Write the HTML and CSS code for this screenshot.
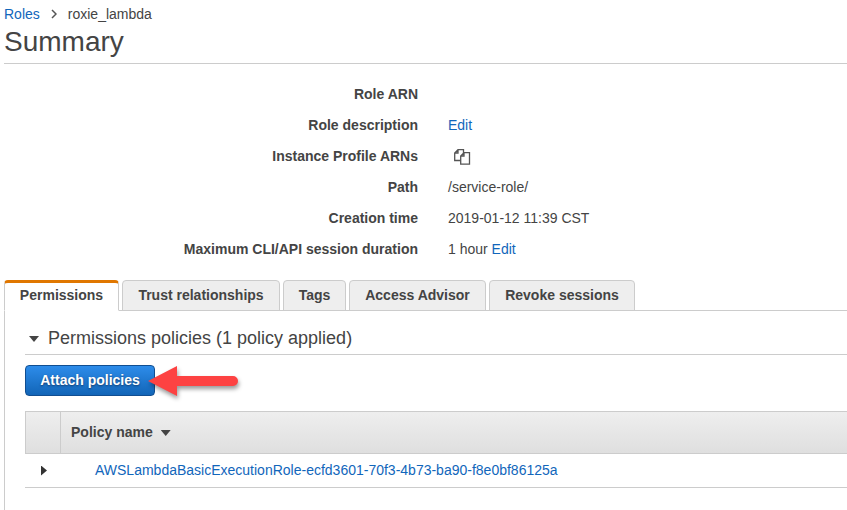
FILE: index.html
```html
<!DOCTYPE html>
<html lang="en">
<head>
<meta charset="utf-8">
<title>Role summary</title>
<link rel="stylesheet" href="styles.css">
</head>
<body>
<header class="page-header">
  <nav class="breadcrumb">
    <a href="#">Roles</a>
    <svg class="chevron" width="6" height="10" viewBox="0 0 6 10"><path d="M1 1l4 4-4 4"/></svg>
    <span>roxie_lambda</span>
  </nav>
  <h1>Summary</h1>
</header>
<dl class="details">
  <dt>Role ARN</dt><dd></dd>
  <dt>Role description</dt><dd><a href="#">Edit</a></dd>
  <dt>Instance Profile ARNs</dt>
  <dd><svg class="copy" width="17" height="16" viewBox="0 0 17 16"><path d="M7 11.500H.7V4L4 .7h5.500V4M4 .7V4H.7"/><path d="M10 3.700h5.500v11.500H6.700V7zM10 3.700V7H6.700"/></svg></dd>
  <dt>Path</dt><dd>/service-role/</dd>
  <dt>Creation time</dt><dd>2019-01-12 11:39 CST</dd>
  <dt>Maximum CLI/API session duration</dt><dd>1 hour <a href="#">Edit</a></dd>
</dl>
<nav class="tabs">
  <a class="tab active tab-permissions" href="#">Permissions</a>
  <a class="tab tab-trust" href="#">Trust relationships</a>
  <a class="tab tab-tags" href="#">Tags</a>
  <a class="tab tab-advisor" href="#">Access Advisor</a>
  <a class="tab tab-revoke" href="#">Revoke sessions</a>
</nav>
<main class="panel">
  <h2><span class="caret"></span><span class="section-title">Permissions policies (1 policy applied)</span></h2>
  <div class="actions">
    <button class="primary">Attach policies</button>
    <svg class="arrow" width="104" height="44" viewBox="0 0 104 44"><path d="M5 20L34 5v10h56a5 5 0 0 1 0 10H34v10z"/></svg>
  </div>
  <div class="table">
    <div class="row head"><div class="cell toggle"></div><div class="cell name">Policy name<span class="caret"></span></div></div>
    <div class="row"><div class="cell toggle"><span class="expand"></span></div><div class="cell policy"><a href="#">AWSLambdaBasicExecutionRole-ecfd3601-70f3-4b73-ba90-f8e0bf86125a</a></div></div>
  </div>
</main>
</body>
</html>
```
FILE: styles.css
```css
* { box-sizing: border-box; }
body {
  margin: 0;
  height: 510px;
  overflow: hidden;
  display: flex;
  flex-direction: column;
  background: #fff;
  color: #444;
  font: 14px/16px "Liberation Sans", Arial, sans-serif;
}
a { color: #1166bb; text-decoration: none; }
.page-header { margin-left: 4px; height: 64px; padding-top: 6px; border-bottom: 1px solid #ccc; }
.breadcrumb { display: flex; align-items: center; height: 16px; }
.chevron { margin: 0 11px; fill: none; stroke: #555; stroke-width: 1.5; }
h1 { margin: 4px 0 0; font-size: 28px; line-height: 32px; font-weight: 400; }
.details {
  margin: 15px 0 0;
  display: grid;
  grid-template-columns: 418px 1fr;
  column-gap: 30px;
  grid-auto-rows: 31px;
  line-height: 31px;
}
dt { text-align: right; font-weight: 700; white-space: nowrap; }
dd { margin: 0; }
.copy { display: block; margin: 8px 0 0 6px; fill: #fff; stroke: #555; stroke-width: 1.3; }
.tabs { display: flex; gap: 3px; height: 31px; margin: 15px 0 -1px 4px; }
.tab {
  border: 1px solid #ccc;
  border-radius: 4px 4px 0 0;
  background: #eee;
  color: #444;
  font-weight: 700;
  line-height: 29px;
  text-align: center;
}
.tab.active { position: relative; background: #fff; border-top: 3px solid #e07700; border-bottom-color: #fff; line-height: 25px; }
.tab-permissions { width: 115px; }
.tab-trust { width: 158px; }
.tab-tags { width: 63px; }
.tab-advisor { width: 137px; }
.tab-revoke { width: 146px; }
.panel { flex: 1; margin-left: 4px; border-top: 1px solid #ccc; border-left: 1px solid #ccc; padding-left: 20px; }
h2 { display: flex; align-items: center; height: 44px; margin: 0; padding: 10px 0 0 4px; border-bottom: 1px solid #ccc; font-size: 18px; line-height: 22px; font-weight: 400; }
.caret { display: inline-block; width: 10px; height: 6px; background: #444; clip-path: polygon(0 0, 100% 0, 50% 100%); }
h2 .caret { margin: 3px 9px 0 0; }
.actions { position: relative; height: 56px; padding-top: 10px; }
.primary {
  display: block;
  width: 130px;
  height: 31px;
  padding: 0 0 1px;
  border: 1px solid #114e91;
  border-radius: 4px;
  background: linear-gradient(#2d8cea, #1265b7);
  color: #fff;
  font: 700 14px/28px "Liberation Sans", Arial, sans-serif;
  text-shadow: 0 1px 2px #123d70;
}
.arrow { position: absolute; left: 118px; top: 6px; fill: #fd4242; filter: drop-shadow(1px 3px 2px rgba(0, 0, 0, .4)); }
.row { display: flex; height: 34px; border-bottom: 1px solid #ccc; }
.head { height: 43px; border: 1px solid #ccc; border-right: 0; background: linear-gradient(#eee, #dfdfdf); font-weight: 700; }
.cell { display: flex; align-items: center; }
.toggle { width: 36px; padding-left: 16px; }
.head .toggle { width: 35px; border-right: 1px solid #ccc; }
.name { padding: 0 0 1px 10px; }
.name .caret { margin: 2px 0 0 8px; }
.expand { width: 6px; height: 10px; background: #333; clip-path: polygon(0 0, 100% 50%, 0 100%); }
.policy { padding: 0 0 1px 34px; }
```
